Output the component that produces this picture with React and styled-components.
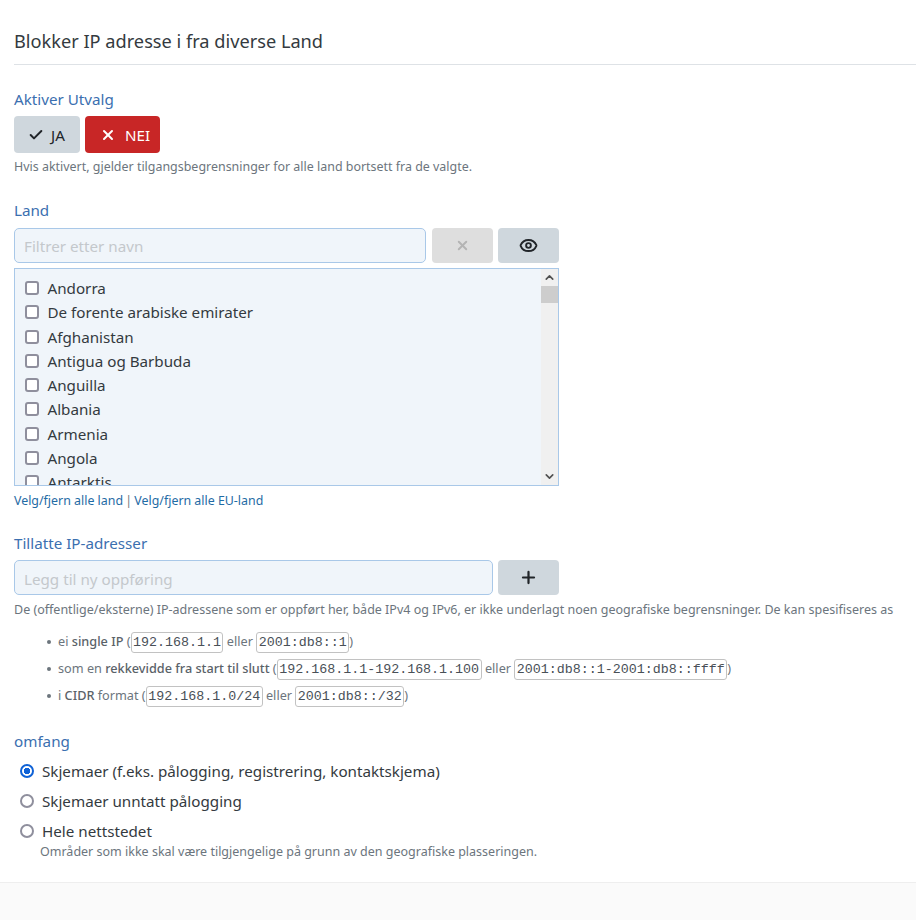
import { createGlobalStyle, styled } from "styled-components";
import { Check, X, Eye, Plus, ChevronUp, ChevronDown } from "lucide-react";

const countries = [
  "Andorra",
  "De forente arabiske emirater",
  "Afghanistan",
  "Antigua og Barbuda",
  "Anguilla",
  "Albania",
  "Armenia",
  "Angola",
  "Antarktis",
];

const App = () => {
  return (
    <>
      <GlobalStyle />
      <Page>
        <Content>
          <Title>Blokker IP adresse i fra diverse Land</Title>

          <Label>Aktiver Utvalg</Label>
          <ToggleRow>
            <ToggleButton>
              <Check size={16} strokeWidth={3} />
              JA
            </ToggleButton>
            <ToggleButton $active>
              <X size={16} strokeWidth={3} />
              NEI
            </ToggleButton>
          </ToggleRow>
          <Hint>Hvis aktivert, gjelder tilgangsbegrensninger for alle land bortsett fra de valgte.</Hint>

          <LandLabel>Land</LandLabel>
          <Narrow>
            <InputRow>
              <TextInput placeholder="Filtrer etter navn" />
              <IconButton $disabled>
                <X size={15} strokeWidth={3} />
              </IconButton>
              <IconButton>
                <Eye size={19} strokeWidth={2.4} />
              </IconButton>
            </InputRow>
            <ListBox>
              <List>
                {countries.map((name) => (
                  <Country key={name}>
                    <CheckInput type="checkbox" />
                    {name}
                  </Country>
                ))}
              </List>
              <ScrollTrack>
                <ChevronUp size={13} strokeWidth={3} />
                <ScrollThumb />
                <ScrollSpace />
                <ChevronDown size={13} strokeWidth={3} />
              </ScrollTrack>
            </ListBox>
            <Links>
              <a>Velg/fjern alle land</a> <Separator>|</Separator> <a>Velg/fjern alle EU-land</a>
            </Links>

            <IpLabel>Tillatte IP-adresser</IpLabel>
            <AddRow>
              <AddInput placeholder="Legg til ny oppføring" />
              <IconButton>
                <Plus size={19} strokeWidth={2.8} />
              </IconButton>
            </AddRow>
          </Narrow>
          <Description>
            De (offentlige/eksterne) IP-adressene som er oppført her, både IPv4 og IPv6, er ikke underlagt noen geografiske begrensninger. De kan spesifiseres as
          </Description>
          <Formats>
            <li>
              ei <b>single IP</b> (<Code>192.168.1.1</Code> eller <Code>2001:db8::1</Code>)
            </li>
            <li>
              som en <b>rekkevidde fra start til slutt</b> (<Code>192.168.1.1-192.168.1.100</Code> eller{" "}
              <Code>2001:db8::1-2001:db8::ffff</Code>)
            </li>
            <li>
              i <b>CIDR</b> format (<Code>192.168.1.0/24</Code> eller <Code>2001:db8::/32</Code>)
            </li>
          </Formats>

          <ScopeLabel>omfang</ScopeLabel>
          <Radios>
            <RadioRow>
              <RadioInput type="radio" name="scope" defaultChecked />
              Skjemaer (f.eks. pålogging, registrering, kontaktskjema)
            </RadioRow>
            <RadioRow>
              <RadioInput type="radio" name="scope" />
              Skjemaer unntatt pålogging
            </RadioRow>
            <RadioRow>
              <RadioInput type="radio" name="scope" />
              Hele nettstedet
            </RadioRow>
          </Radios>
          <ScopeHint>Områder som ikke skal være tilgjengelige på grunn av den geografiske plasseringen.</ScopeHint>
        </Content>
        <Footer />
      </Page>
    </>
  );
};

export default App;

const GlobalStyle = createGlobalStyle`
  html, body {
    margin: 0;
    padding: 0;
    background: #fff;
  }
  body {
    font-family: "Noto Sans", "Liberation Sans", sans-serif;
    color: #212529;
  }
`;

const Page = styled.div`
  width: 916px;
  height: 920px;
  display: flex;
  flex-direction: column;
  overflow: hidden;
`;

const Content = styled.div`
  height: 882px;
  box-sizing: border-box;
  padding: 0 0 0 14px;
`;

const Title = styled.h1`
  margin: 0 0 25px;
  height: 65px;
  box-sizing: border-box;
  padding-top: 29px;
  border-bottom: 1px solid #dee2e6;
  font-size: 18.2px;
  line-height: 24px;
  font-weight: 400;
  color: #343a40;
`;

const Label = styled.div`
  font-size: 15.2px;
  line-height: 18px;
  padding-bottom: 2px;
  color: #3b6fb0;
`;

const ToggleRow = styled.div`
  display: flex;
  gap: 5px;
  margin-top: 6px;
`;

const ToggleButton = styled.div`
  height: 37px;
  box-sizing: border-box;
  width: ${(p) => (p.$active ? "75px" : "66px")};
  padding-left: ${(p) => (p.$active ? "15px" : "14px")};
  display: flex;
  align-items: center;
  gap: ${(p) => (p.$active ? "9px" : "7px")};
  border-radius: 4px;
  font-size: 15.2px;
  background: ${(p) => (p.$active ? "#c82626" : "#cfd7dd")};
  color: ${(p) => (p.$active ? "#fff" : "#212529")};
`;

const Hint = styled.div`
  margin-top: 6px;
  font-size: 12.45px;
  line-height: 16px;
  color: #6c757d;
`;

const LandLabel = styled(Label)`
  margin-top: 26px;
`;

const Narrow = styled.div`
  width: 545px;
`;

const InputRow = styled.div`
  display: flex;
  gap: 5px;
  margin-top: 7px;
  & > input + div {
    margin-left: 1px;
  }
`;

const AddRow = styled(InputRow)`
  margin-top: 6px;
  & > input + div {
    margin-left: 0;
  }
`;

const TextInput = styled.input`
  flex: 1;
  min-width: 0;
  height: 35px;
  box-sizing: border-box;
  padding: 0 9px;
  border: 1px solid #a9c8e8;
  border-radius: 5px;
  background: #f0f5fa;
  font-family: inherit;
  font-size: 15.2px;
  outline: none;
  &::placeholder {
    color: #c4c8cc;
    opacity: 1;
  }
`;

const AddInput = styled(TextInput)`
  padding-top: 2px;
`;

const IconButton = styled.div`
  width: 61px;
  height: 35px;
  display: flex;
  align-items: center;
  justify-content: center;
  border-radius: 4px;
  background: ${(p) => (p.$disabled ? "#dedede" : "#cfd7dd")};
  color: ${(p) => (p.$disabled ? "#b4b4b4" : "#212529")};
`;

const ListBox = styled.div`
  margin-top: 5px;
  height: 218px;
  box-sizing: border-box;
  display: flex;
  border: 1px solid #a9c8e8;
  background: #f0f5fa;
  overflow: hidden;
`;

const List = styled.div`
  flex: 1;
  padding: 6.8px 0 0 10px;
  overflow: hidden;
`;

const Country = styled.label`
  display: flex;
  align-items: center;
  gap: 8.5px;
  height: 24.3px;
  font-size: 15.2px;
  color: #343a40;
`;

const CheckInput = styled.input`
  appearance: none;
  flex: none;
  margin: 0;
  width: 14px;
  height: 14px;
  box-sizing: border-box;
  border: 2px solid #8f8f9d;
  border-radius: 3px;
  background: #fff;
`;

const ScrollTrack = styled.div`
  width: 17px;
  flex: none;
  display: flex;
  flex-direction: column;
  align-items: center;
  background: #f0f0f0;
  color: #505050;
  padding: 2px 0;
  box-sizing: border-box;
`;

const ScrollThumb = styled.div`
  align-self: stretch;
  height: 17px;
  margin-top: 2px;
  background: #cdcdcd;
`;

const ScrollSpace = styled.div`
  flex: 1;
`;

const Links = styled.div`
  margin-top: 6px;
  font-size: 12.4px;
  line-height: 17px;
  color: #6c757d;
  & > a {
    color: #1f6ba5;
  }
`;

const Separator = styled.span`
  margin: 0 -1px;
`;

const IpLabel = styled(Label)`
  margin-top: 25px;
`;

const Description = styled.div`
  margin-top: 6px;
  font-size: 12.5px;
  line-height: 18px;
  color: #6c757d;
  white-space: nowrap;
`;

const Formats = styled.ul`
  margin: 9px 0 0;
  padding: 0 0 0 44px;
  list-style: none;
  font-size: 12.7px;
  color: #6c757d;
  & > li {
    position: relative;
    height: 27px;
    line-height: 27px;
    white-space: nowrap;
  }
  & > li::before {
    content: "";
    position: absolute;
    left: -11px;
    top: 12px;
    width: 4px;
    height: 4px;
    border-radius: 50%;
    background: #6c757d;
  }
  & b {
    font-weight: 500;
    color: #5a6268;
  }
`;

const Code = styled.code`
  display: inline-block;
  box-sizing: border-box;
  height: 21px;
  line-height: 19px;
  padding: 0 1.5px;
  border: 1px solid #c2c2c2;
  border-radius: 3px;
  font-family: "Liberation Mono", monospace;
  font-size: 13.33px;
  color: #495057;
  background: #fff;
`;

const ScopeLabel = styled(Label)`
  margin-top: 23px;
`;

const Radios = styled.div`
  margin-top: 4px;
  padding-left: 6px;
`;

const RadioRow = styled.label`
  display: flex;
  align-items: center;
  gap: 8px;
  height: 30px;
  font-size: 15.2px;
  color: #343a40;
`;

const RadioInput = styled.input`
  appearance: none;
  flex: none;
  margin: 0;
  width: 14px;
  height: 14px;
  box-sizing: border-box;
  border: 2px solid #8f8f9d;
  border-radius: 50%;
  background: #fff;
  &:checked {
    border-color: #0f62d6;
    background: radial-gradient(circle, #0f62d6 0 3px, #fff 3.5px);
  }
`;

const ScopeHint = styled.div`
  margin: -2px 0 0 26px;
  font-size: 12.5px;
  line-height: 16px;
  color: #6c757d;
`;

const Footer = styled.div`
  flex: 1;
  border-top: 1px solid #eeeeee;
  background: #fafafa;
`;
